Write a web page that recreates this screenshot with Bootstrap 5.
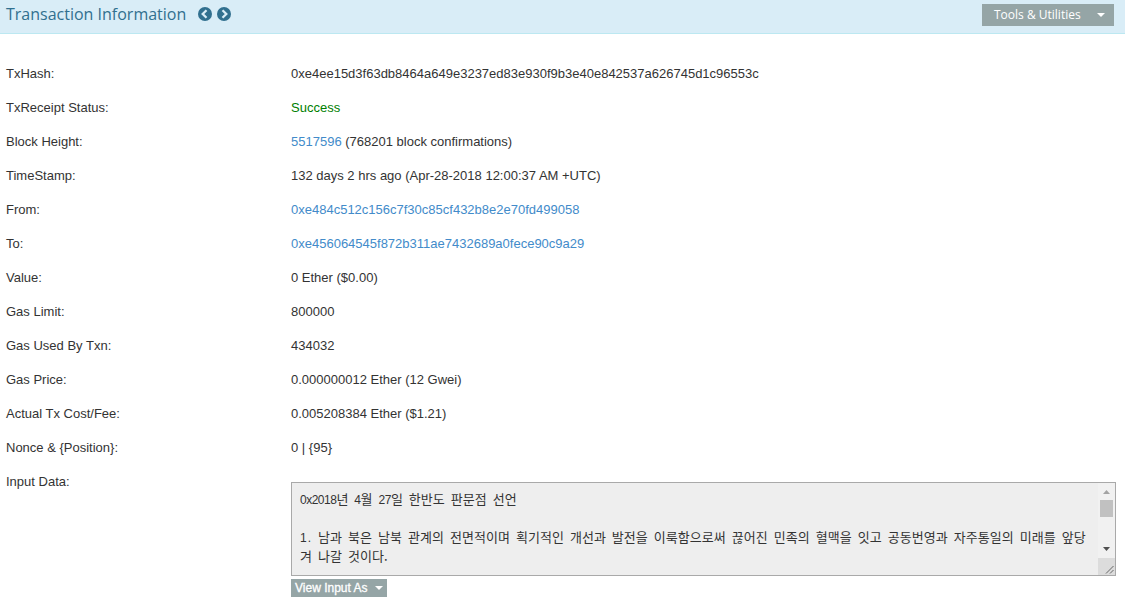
<!DOCTYPE html>
<html lang="en">
  <head>
    <meta charset="utf-8" />
    <meta name="viewport" content="width=device-width, initial-scale=1" />
    <title>Transaction Information</title>
    <link
      href="https://cdn.jsdelivr.net/npm/bootstrap@5.3.3/dist/css/bootstrap.min.css"
      rel="stylesheet"
    />
    <style>
      body {
        font-family: 'Liberation Sans', Arial, sans-serif;
        font-size: 13px;
        line-height: 20px;
        color: #333;
        overflow: hidden;
      }
      a {
        color: #428bca;
        text-decoration: none;
      }
      .title-bar {
        height: 34px;
        padding: 0 11px 4px 6px;
        background: #d9edf7;
        border-bottom: 1px solid #bce8f1;
      }
      .title-bar h1 {
        font: 400 16px/20px 'Open Sans', sans-serif;
        color: #31708f;
        width: 192px;
        padding-bottom: 2px;
      }
      .title-bar a {
        color: #31708f;
        padding-bottom: 1px;
      }
      .title-bar a + a {
        margin-left: 5px;
      }
      .btn-gray {
        --bs-btn-color: #fff;
        --bs-btn-bg: #95a5a6;
        --bs-btn-hover-color: #fff;
        --bs-btn-hover-bg: #7f8c8d;
        --bs-btn-border-width: 0;
        --bs-btn-border-radius: 0;
      }
      .btn-tools {
        width: 132px;
        height: 22px;
        padding: 0 9px 0 12px;
        font: 400 12px/22px 'Open Sans', sans-serif;
      }
      .btn-view {
        width: 96px;
        height: 18px;
        padding: 0 4px;
        margin-top: 3px;
        font-size: 12px;
        line-height: 18px;
        -webkit-text-stroke: 0.3px #fff;
      }
      .btn-gray::after {
        margin: 0;
        border-width: 4px 4px 0;
      }
      .tx-list {
        padding: 30px 9px 0 6px;
      }
      .tx-list dt,
      .tx-list dd {
        height: 34px;
        padding: 0;
        margin: 0;
        font-weight: 400;
        line-height: 20px;
        white-space: nowrap;
      }
      .tx-list dt {
        width: 285px;
      }
      .tx-list .status-ok {
        color: green;
      }
      .input-data {
        height: 94px;
        margin-top: 10px;
        background: #eee;
        border: 1px solid #a9a9a9;
      }
      .input-text {
        padding: 6px 0 0 8px;
        font-family: 'Noto Sans CJK KR', sans-serif;
        font-size: 13px;
        line-height: 19px;
        letter-spacing: 0.04px;
        word-spacing: 2.3px;
        white-space: nowrap;
      }
      .input-text p {
        height: 19px;
        margin: 0;
      }
      .input-text span {
        font-family: 'Liberation Sans', sans-serif;
        font-size: 12px;
        line-height: 1;
        letter-spacing: -0.5px;
      }
      .input-text .item-no {
        letter-spacing: 1px;
      }
      .scroll-col {
        width: 17px;
        background: #f1f1f1;
      }
      .scroll-thumb {
        width: 13px;
        height: 17px;
        background: #c1c1c1;
      }
      .resizer {
        width: 17px;
        height: 17px;
        background: #dcdcdc;
      }
    </style>
  </head>

  <body>
    <header class="title-bar d-flex align-items-center">
      <h1 class="m-0 text-nowrap">Transaction Information</h1>
      <a href="#" class="d-flex" aria-label="Previous">
        <svg width="14" height="14" viewBox="0 0 14 14">
          <circle cx="7" cy="7" r="7" fill="currentColor" />
          <path d="M8.500 3.200 4.700 7l3.800 3.800" fill="none" stroke="#d9edf7" stroke-width="2.300" />
        </svg>
      </a>
      <a href="#" class="d-flex" aria-label="Next">
        <svg width="14" height="14" viewBox="0 0 14 14">
          <circle cx="7" cy="7" r="7" fill="currentColor" />
          <path d="M5.500 3.200 9.300 7l-3.800 3.800" fill="none" stroke="#d9edf7" stroke-width="2.300" />
        </svg>
      </a>
      <button
        type="button"
        class="btn btn-gray btn-tools dropdown-toggle ms-auto d-flex align-items-center justify-content-between"
      >
        Tools &amp; Utilities
      </button>
    </header>

    <main class="tx-list">
      <dl class="row g-0 m-0">
        <dt class="col-auto">TxHash:</dt>
        <dd class="col">0xe4ee15d3f63db8464a649e3237ed83e930f9b3e40e842537a626745d1c96553c</dd>
        <div class="w-100"></div>
        <dt class="col-auto">TxReceipt Status:</dt>
        <dd class="col status-ok">Success</dd>
        <div class="w-100"></div>
        <dt class="col-auto">Block Height:</dt>
        <dd class="col"><a href="#">5517596</a> (768201 block confirmations)</dd>
        <div class="w-100"></div>
        <dt class="col-auto">TimeStamp:</dt>
        <dd class="col">132 days 2 hrs ago (Apr-28-2018 12:00:37 AM +UTC)</dd>
        <div class="w-100"></div>
        <dt class="col-auto">From:</dt>
        <dd class="col"><a href="#">0xe484c512c156c7f30c85cf432b8e2e70fd499058</a></dd>
        <div class="w-100"></div>
        <dt class="col-auto">To:</dt>
        <dd class="col"><a href="#">0xe456064545f872b311ae7432689a0fece90c9a29</a></dd>
        <div class="w-100"></div>
        <dt class="col-auto">Value:</dt>
        <dd class="col">0 Ether ($0.00)</dd>
        <div class="w-100"></div>
        <dt class="col-auto">Gas Limit:</dt>
        <dd class="col">800000</dd>
        <div class="w-100"></div>
        <dt class="col-auto">Gas Used By Txn:</dt>
        <dd class="col">434032</dd>
        <div class="w-100"></div>
        <dt class="col-auto">Gas Price:</dt>
        <dd class="col">0.000000012 Ether (12 Gwei)</dd>
        <div class="w-100"></div>
        <dt class="col-auto">Actual Tx Cost/Fee:</dt>
        <dd class="col">0.005208384 Ether ($1.21)</dd>
        <div class="w-100"></div>
        <dt class="col-auto">Nonce &amp; {Position}:</dt>
        <dd class="col">0 | {95}</dd>
        <div class="w-100"></div>
        <dt class="col-auto">Input Data:</dt>
        <dd class="col h-auto">
          <div class="input-data d-flex">
            <div class="input-text flex-grow-1" lang="ko">
              <p><span>0x2018</span>년 <span>4</span>월 <span>27</span>일 한반도 판문점 선언</p>
              <p></p>
              <p><span class="item-no">1.</span> 남과 북은 남북 관계의 전면적이며 획기적인 개선과 발전을 이룩함으로써 끊어진 민족의 혈맥을 잇고 공동번영과 자주통일의 미래를 앞당</p>
              <p>겨 나갈 것이다.</p>
            </div>
            <div class="scroll-col d-flex flex-column align-items-center">
              <svg width="17" height="17" viewBox="0 0 17 17">
                <path d="M5 11h7L8.500 7z" fill="#a3a3a3" />
              </svg>
              <div class="scroll-thumb"></div>
              <svg class="mt-auto" width="17" height="17" viewBox="0 0 17 17">
                <path d="M5 6h7l-3.500 4z" fill="#505050" />
              </svg>
              <svg class="resizer" viewBox="0 0 17 17">
                <path d="M8 15.500 15.500 8M12 15.500l3.500-3.500" stroke="#666" stroke-width="1" />
              </svg>
            </div>
          </div>
          <button
            type="button"
            class="btn btn-gray btn-view dropdown-toggle d-flex align-items-center justify-content-between"
          >
            View Input As
          </button>
        </dd>
      </dl>
    </main>

    <script src="https://cdn.jsdelivr.net/npm/bootstrap@5.3.3/dist/js/bootstrap.bundle.min.js"></script>
  </body>
</html>
